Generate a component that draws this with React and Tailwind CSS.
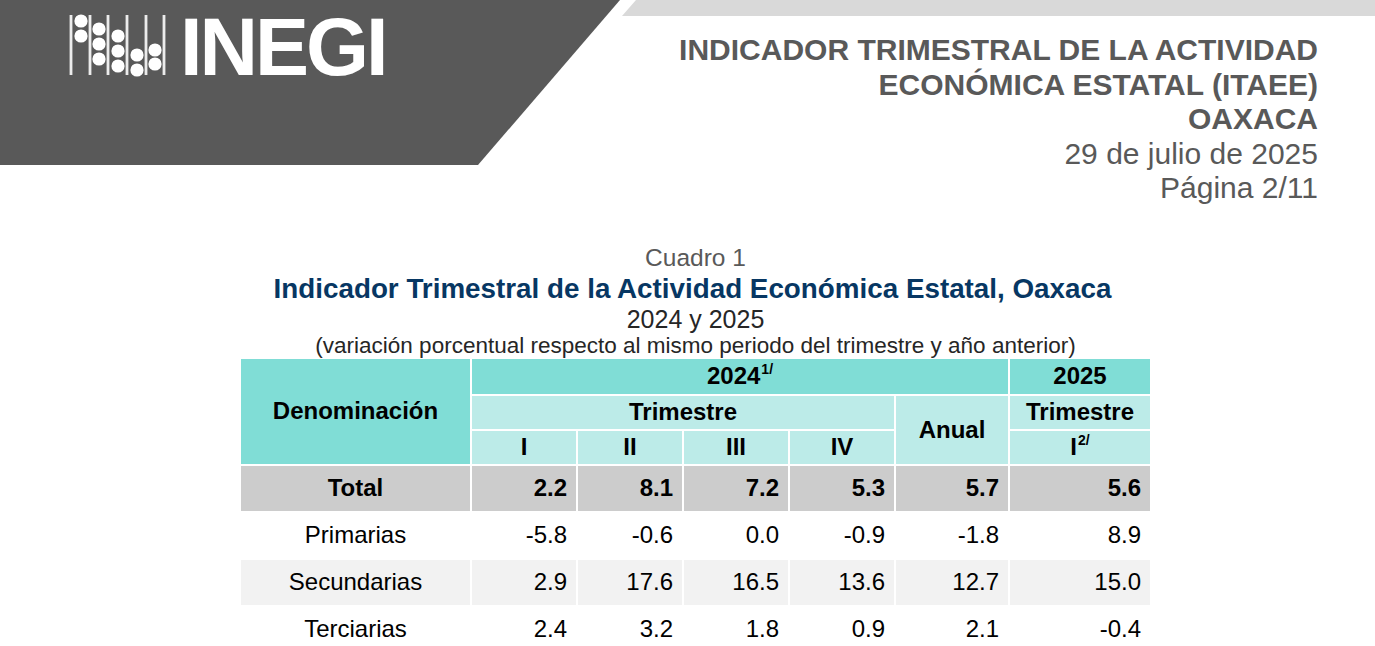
import React from 'react';

const cols = 'grid-cols-[229px_104px_104px_104px_104px_112px_140px]';

const rows = [
  { name: 'Total', vals: ['2.2', '8.1', '7.2', '5.3', '5.7', '5.6'], bg: 'bg-[#cccccc]', bold: true },
  { name: 'Primarias', vals: ['-5.8', '-0.6', '0.0', '-0.9', '-1.8', '8.9'], bg: 'bg-white' },
  { name: 'Secundarias', vals: ['2.9', '17.6', '16.5', '13.6', '12.7', '15.0'], bg: 'bg-[#f2f2f2]' },
  { name: 'Terciarias', vals: ['2.4', '3.2', '1.8', '0.9', '2.1', '-0.4'], bg: 'bg-white' },
];

const Abacus = () => {
  const bars = [6, 25, 43, 62, 81, 99];
  const beads = [
    [16, [9, 24]],
    [34, [17, 32, 47]],
    [53, [24, 39, 54]],
    [72, [43, 58]],
    [90, [38, 52]],
  ];
  return (
    <svg width="110" height="68" viewBox="0 0 110 68" className="shrink-0">
      {bars.map((x) => (
        <g key={x}>
          <rect x={x - 1.5} y="3" width="3" height="60" fill="#cfcfcf" />
          <rect x={x - 0.6} y="3" width="1.2" height="60" fill="#ffffff" />
        </g>
      ))}
      {beads.map(([cx, ys]) =>
        ys.map((cy) => <circle key={`${cx}-${cy}`} cx={cx} cy={cy} r="6.6" fill="#ffffff" />)
      )}
    </svg>
  );
};

const Head = ({ className = '', children }) => (
  <div className={`flex items-center justify-center font-bold text-black ${className}`}>{children}</div>
);

const Report = () => {
  return (
    <div className="min-h-[646px] bg-white font-['Liberation_Sans',Arial,sans-serif] overflow-hidden">
      <header className="flex">
        <div className="w-[620px] h-[165px] shrink-0 bg-[#595959] [clip-path:polygon(0_0,100%_0,478px_100%,0_100%)]">
          <div className="flex items-start pl-[65px] pt-[7px] gap-[5px]">
            <div className="mt-[5px]">
              <Abacus />
            </div>
            <span className="text-white font-bold text-[81px] leading-none tracking-[-3px]">INEGI</span>
          </div>
        </div>
        <div className="flex-1 flex flex-col">
          <div className="h-[16px] bg-[#d9d9d9] [clip-path:polygon(16px_0,100%_0,100%_100%,2px_100%)]" />
          <div className="mt-[17px] pr-[57px] text-right text-[30px] leading-[34.5px] text-[#595959]">
            <p className="font-bold">INDICADOR TRIMESTRAL DE LA ACTIVIDAD</p>
            <p className="font-bold">ECONÓMICA ESTATAL (ITAEE)</p>
            <p className="font-bold">OAXACA</p>
            <p>29 de julio de 2025</p>
            <p>Página 2/11</p>
          </div>
        </div>
      </header>

      <section className="ml-[241px] w-[909px] mt-[37px]">
        <div className="text-center">
          <p className="text-[24.5px] leading-[30px] text-[#595959]">Cuadro 1</p>
          <p className="text-[27.8px] leading-[32px] font-bold text-[#073763] -ml-[6px]">
            Indicador Trimestral de la Actividad Económica Estatal, Oaxaca
          </p>
          <p className="text-[25px] leading-[28px] text-[#262626]">2024 y 2025</p>
          <p className="text-[22.5px] leading-[26px] text-[#262626]">
            (variación porcentual respecto al mismo periodo del trimestre y año anterior)
          </p>
        </div>

        <div className={`grid ${cols} grid-rows-[35px_33px_33px] gap-[2px] text-[24px]`}>
          <Head className="row-span-3 bg-[#80ddd6]">Denominación</Head>
          <Head className="col-span-5 bg-[#80ddd6]">
            2024<sup className="text-[14px] ml-[1px]">1/</sup>
          </Head>
          <Head className="bg-[#80ddd6]">2025</Head>
          <Head className="col-span-4 bg-[#bcebe8]">Trimestre</Head>
          <Head className="row-span-2 bg-[#bcebe8]">Anual</Head>
          <Head className="bg-[#bcebe8]">Trimestre</Head>
          {['I', 'II', 'III', 'IV'].map((t) => (
            <Head key={t} className="bg-[#bcebe8]">
              {t}
            </Head>
          ))}
          <Head className="bg-[#bcebe8]">
            I<sup className="text-[14px] ml-[1px]">2/</sup>
          </Head>
        </div>

        <div className={`grid ${cols} auto-rows-[45px] gap-[2px] mt-[2px] text-[24px] text-black`}>
          {rows.map((r) => (
            <React.Fragment key={r.name}>
              <div className={`flex items-center justify-center ${r.bg} ${r.bold ? 'font-bold' : ''}`}>{r.name}</div>
              {r.vals.map((v, i) => (
                <div
                  key={i}
                  className={`flex items-center justify-end pr-[9px] ${r.bg} ${r.bold ? 'font-bold' : ''}`}
                >
                  {v}
                </div>
              ))}
            </React.Fragment>
          ))}
        </div>
      </section>
    </div>
  );
};

export default function App() {
  return <Report />;
}
